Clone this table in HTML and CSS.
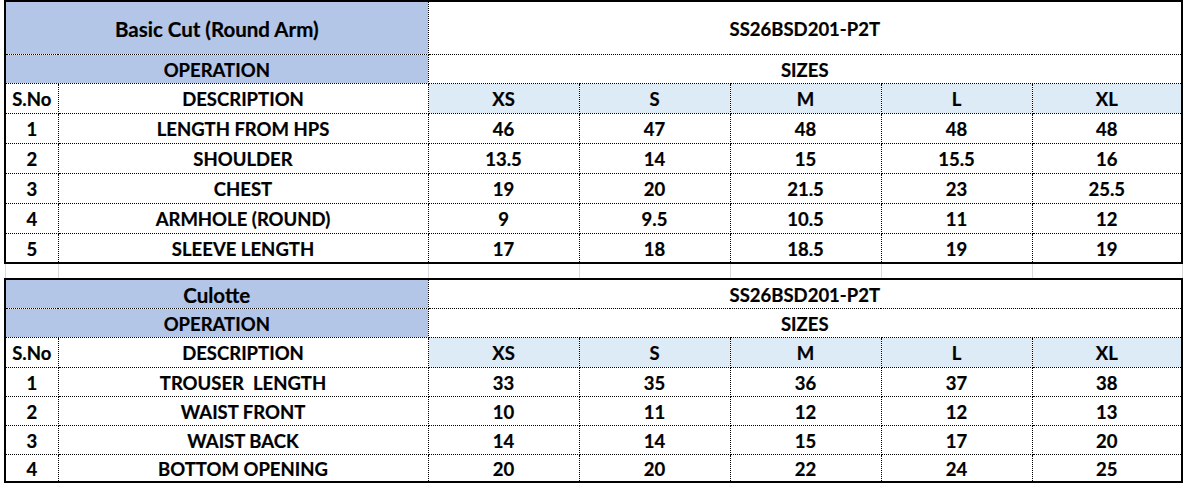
FILE: index.html
```html
<!DOCTYPE html>
<html>
<head>
<meta charset="utf-8">
<link rel="stylesheet" href="styles.css">
</head>
<body>
<table class="sheet">
  <colgroup>
    <col class="c-no"><col class="c-desc"><col class="c-sz"><col class="c-sz"><col class="c-sz"><col class="c-sz"><col class="c-xl">
  </colgroup>
  <tbody class="block">
    <tr class="r-title"><td colspan="2" class="hdr mixed">Basic Cut (Round Arm)</td><td colspan="5">SS26BSD201-P2T</td></tr>
    <tr class="r-29"><td colspan="2" class="hdr">OPERATION</td><td colspan="5">SIZES</td></tr>
    <tr class="r-30"><td>S.No</td><td>DESCRIPTION</td><td class="sz">XS</td><td class="sz">S</td><td class="sz">M</td><td class="sz">L</td><td class="sz">XL</td></tr>
    <tr class="r-30"><td>1</td><td>LENGTH FROM HPS</td><td>46</td><td>47</td><td>48</td><td>48</td><td>48</td></tr>
    <tr class="r-30"><td>2</td><td>SHOULDER</td><td>13.5</td><td>14</td><td>15</td><td>15.5</td><td>16</td></tr>
    <tr class="r-30"><td>3</td><td>CHEST</td><td>19</td><td>20</td><td>21.5</td><td>23</td><td>25.5</td></tr>
    <tr class="r-30"><td>4</td><td>ARMHOLE (ROUND)</td><td>9</td><td>9.5</td><td>10.5</td><td>11</td><td>12</td></tr>
    <tr class="r-29"><td>5</td><td>SLEEVE LENGTH</td><td>17</td><td>18</td><td>18.5</td><td>19</td><td>19</td></tr>
  </tbody>
  <tbody class="gap">
    <tr><td></td><td></td><td></td><td></td><td></td><td></td><td></td></tr>
  </tbody>
  <tbody class="block">
    <tr class="r-29"><td colspan="2" class="hdr mixed">Culotte</td><td colspan="5">SS26BSD201-P2T</td></tr>
    <tr class="r-29"><td colspan="2" class="hdr">OPERATION</td><td colspan="5">SIZES</td></tr>
    <tr class="r-30"><td>S.No</td><td>DESCRIPTION</td><td class="sz">XS</td><td class="sz">S</td><td class="sz">M</td><td class="sz">L</td><td class="sz">XL</td></tr>
    <tr class="r-29"><td>1</td><td>TROUSER&nbsp; LENGTH</td><td>33</td><td>35</td><td>36</td><td>37</td><td>38</td></tr>
    <tr class="r-29"><td>2</td><td>WAIST FRONT</td><td>10</td><td>11</td><td>12</td><td>12</td><td>13</td></tr>
    <tr class="r-29"><td>3</td><td>WAIST BACK</td><td>14</td><td>14</td><td>15</td><td>17</td><td>20</td></tr>
    <tr class="r-27"><td>4</td><td>BOTTOM OPENING</td><td>20</td><td>20</td><td>22</td><td>24</td><td>25</td></tr>
  </tbody>
</table>
</body>
</html>
```
FILE: styles.css
```css
html, body {
  margin: 0;
  padding: 0;
  background: #ffffff;
}
body {
  padding-left: 4px;
  font-family: Lato, "Open Sans", "Liberation Sans", sans-serif;
  font-weight: 700;
  font-size: 18.5px;
  color: #000;
}
.sheet {
  border-collapse: collapse;
  table-layout: fixed;
  width: 1177px;
}
.c-no { width: 53px; }
.c-desc { width: 370px; }
.c-sz { width: 151px; }
.c-xl { width: 150px; }

.sheet td {
  border: 1px dotted #000;
  padding: 1px 0 0;
  text-align: center;
  vertical-align: middle;
  line-height: 18px;
  white-space: nowrap;
  overflow: hidden;
  -webkit-text-stroke: 0.2px #000;
}
.block tr:first-child td { border-top: 2px solid #000; }
.block tr:last-child td { border-bottom: 2px solid #000; }
.block td:first-child { border-left: 2px solid #000; }
.block td:last-child { border-right: 2px solid #000; }

.hdr { background: #b4c6e7; }
.sz { background: #ddebf7; }
.sheet td.mixed { font-size: 20.5px; }

.r-title td { height: 51px; }
.r-30 td { height: 28px; }
.r-29 td { height: 27px; }
.r-27 td { height: 25px; }

.gap td {
  height: 13px;
  border-top: none;
  border-bottom: none;
  border-left: 1px solid #d9d9d9;
  border-right: 1px solid #d9d9d9;
}
```
